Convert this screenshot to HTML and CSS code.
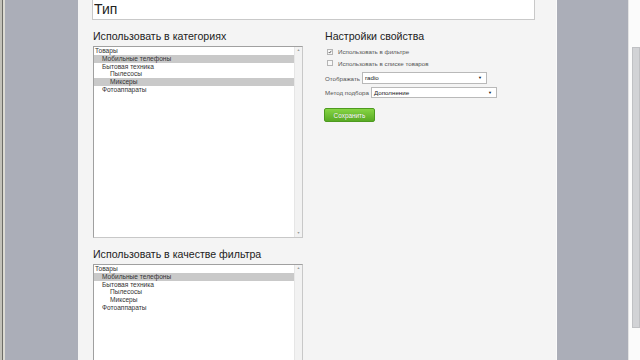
FILE: index.html
```html
<!DOCTYPE html>
<html lang="ru">
<head>
  <meta charset="UTF-8">
  <title>Свойство: Тип</title>
  <link rel="stylesheet" href="styles.css">
</head>
<body>

  <div class="window">
    <div class="edge-left"></div>
    <div class="desk"></div>

    <div class="panel">
      <input class="title-input" type="text" value="Тип">

      <div class="columns">
        <div class="col-left">
          <h3>Использовать в категориях</h3>
          <div class="listbox tall">
            <ul class="tree">
              <li class="lvl0">Товары</li>
              <li class="lvl1 sel">Мобильные телефоны</li>
              <li class="lvl1">Бытовая техника</li>
              <li class="lvl2">Пылесосы</li>
              <li class="lvl2 sel">Миксеры</li>
              <li class="lvl1">Фотоаппараты</li>
            </ul>
            <div class="vscroll">
              <span class="arr">&#9650;</span>
              <span class="arr">&#9660;</span>
            </div>
          </div>

          <h3 class="second">Использовать в качестве фильтра</h3>
          <div class="listbox short">
            <ul class="tree">
              <li class="lvl0">Товары</li>
              <li class="lvl1 sel">Мобильные телефоны</li>
              <li class="lvl1">Бытовая техника</li>
              <li class="lvl2">Пылесосы</li>
              <li class="lvl2">Миксеры</li>
              <li class="lvl1">Фотоаппараты</li>
            </ul>
            <div class="vscroll">
              <span class="arr">&#9650;</span>
            </div>
          </div>
        </div>

        <div class="col-right">
          <h3>Настройки свойства</h3>

          <label class="check">
            <span class="box">
              <svg width="6" height="6" viewBox="0 0 6 6"><path d="M1 3 L2.5 4.6 L5 1.2" fill="none" stroke="#333" stroke-width="1.1"/></svg>
            </span>
            Использовать в фильтре
          </label>
          <label class="check">
            <span class="box"></span>
            Использовать в списке товаров
          </label>

          <div class="field">
            <span class="field-label">Отображать</span>
            <div class="select w1">radio<span class="caret">&#9660;</span></div>
          </div>
          <div class="field">
            <span class="field-label">Метод подбора</span>
            <div class="select w2">Дополнение<span class="caret">&#9660;</span></div>
          </div>

          <button class="save" type="button">Сохранить</button>
        </div>
      </div>
    </div>

    <div class="desk right"></div>
    <div class="page-scroll">
      <div class="thumb"></div>
    </div>
  </div>

</body>
</html>
```

FILE: styles.css
```css
* {
  box-sizing: border-box;
}

body {
  margin: 0;
  font-family: 'Liberation Sans', Arial, sans-serif;
  overflow: hidden;
}

.window {
  display: flex;
  width: 640px;
  height: 360px;
  overflow: hidden;
}

.edge-left {
  width: 5px;
  background: linear-gradient(to right, #c2c1b8 0, #c2c1b8 2px, #6d6d66 2px, #6d6d66 3px, #dcdbd3 3px);
}

.desk {
  width: 73px;
  background-color: #abaeb8;
}

.desk.right {
  width: 72px;
  border-left: 1px solid #fafafa;
}

.page-scroll {
  width: 12px;
  background-color: #fbfbfb;
  border-left: 1px solid #e4e4e4;
  padding: 47px 0 0 3px;
}

.page-scroll .thumb {
  height: 281px;
  background-color: #d2d3d6;
  border: 1px solid #c0c1c4;
}

.panel {
  width: 478px;
  background-color: #f4f4f4;
  padding-left: 15px;
}

.title-input {
  display: block;
  width: 443px;
  height: 22px;
  margin: -2px 0 0 -1px;
  padding: 0 1px;
  border: 1px solid #c9c9c9;
  background: #fff;
  font-family: 'Liberation Sans', Arial, sans-serif;
  font-size: 14px;
  color: #222;
  outline: none;
}

.columns {
  display: flex;
  gap: 22px;
}

.col-left {
  width: 210px;
}

h3 {
  margin: 10px 0 4px;
  font-size: 10.6px;
  line-height: 12px;
  font-weight: normal;
  color: #222;
}

h3.second {
  margin-top: 10px;
}

.listbox {
  position: relative;
  background: #fff;
  border: 1px solid #a9a9a9;
  border-color: #a0a0a0 #c8c8c8 #c8c8c8 #a0a0a0;
}

.listbox.tall {
  height: 192px;
}

.listbox.short {
  height: 110px;
}

.tree {
  list-style: none;
  margin: 0;
  padding: 0 8px 0 0;
}

.tree li {
  height: 7.8px;
  line-height: 7.8px;
  font-size: 6.6px;
  color: #333;
  white-space: nowrap;
}

.tree .lvl0 { padding-left: 1px; }
.tree .lvl1 { padding-left: 8px; }
.tree .lvl2 { padding-left: 16px; }

.tree .sel {
  background-color: #c9c9c9;
}

.vscroll {
  position: absolute;
  top: 0;
  right: 0;
  bottom: 0;
  width: 8px;
  background: #f2f2f2;
  border-left: 1px solid #e6e6e6;
  display: flex;
  flex-direction: column;
  justify-content: space-between;
  align-items: center;
}

.vscroll .arr {
  font-size: 3.5px;
  line-height: 7px;
  color: #999;
}

.check {
  display: flex;
  align-items: center;
  height: 11.5px;
  padding-left: 2px;
  font-size: 6.2px;
  color: #555;
}

.check .box {
  display: flex;
  align-items: center;
  justify-content: center;
  width: 6px;
  height: 6px;
  margin-right: 5px;
  border: 1px solid #b5b5b5;
  background: #f8f8f8;
}

.field {
  display: flex;
  align-items: center;
  margin-top: 3px;
  font-size: 6.2px;
  color: #555;
}

.field-label {
  margin-right: 2px;
}

.select {
  position: relative;
  height: 12px;
  line-height: 10px;
  padding-left: 2px;
  background: #fff;
  border: 1px solid #b9b9b9;
  color: #222;
}

.select.w1 {
  width: 125px;
}

.select.w2 {
  width: 126px;
  height: 11px;
  line-height: 9px;
}

.select .caret {
  position: absolute;
  right: 4px;
  top: 0;
  font-size: 4px;
  color: #111;
}

.save {
  display: block;
  width: 51px;
  height: 14px;
  margin: 10px 0 0 -1px;
  padding: 0;
  border: 1px solid #4d9a1f;
  border-radius: 2px;
  background: linear-gradient(to bottom, #86d544, #59ab24);
  color: #fff;
  font-family: 'Liberation Sans', Arial, sans-serif;
  font-size: 6.4px;
  text-shadow: 0 0 1px rgba(0,0,0,0.3);
  cursor: pointer;
}
```
